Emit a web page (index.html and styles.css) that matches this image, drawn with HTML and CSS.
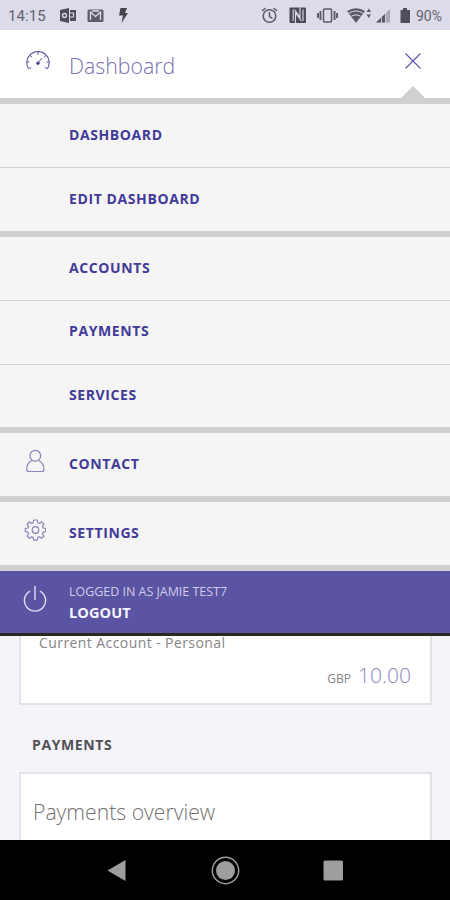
FILE: index.html
```
<!DOCTYPE html>
<html lang="en">
<head>
<meta charset="utf-8">
<title>Dashboard</title>
<link rel="stylesheet" href="styles.css">
</head>
<body>
<div class="screen">
  <div class="status">
    <span class="clock">14:15</span>
    <svg class="status-left" width="72" height="30" viewBox="60 0 72 30">
      <path fill="#4d4c58" d="M60 10l9-2v15l-9-2zM70 10h6v11h-6z"/>
      <circle cx="64.500" cy="15.500" r="2" fill="none" stroke="#dcdbea" stroke-width="1.300"/>
      <path d="M70 13h3.500v4H70" fill="none" stroke="#dcdbea" stroke-width="1.200"/>
      <rect x="87.500" y="9.500" width="16" height="12.500" rx="1.500" fill="#5c5b67"/>
      <path d="M90.500 20v-8l5 4.500 5-4.500v8M92 11h7" fill="none" stroke="#dcdbea" stroke-width="1.300"/>
      <path d="M120.500 8h6.500l-2 5h3l-6.500 10 1.500-7.500h-4z" fill="#45444f"/>
    </svg>
    <svg class="status-right" width="152" height="30" viewBox="260 0 152 30">
      <g fill="none" stroke="#5a5965" stroke-width="1.500">
        <circle cx="269.500" cy="16" r="6.300"/><path d="M269.500 12v4.500l3 2M262 11l3.500-3M277 11l-3.500-3"/>
        <rect x="323.500" y="9" width="8" height="13" rx="1"/>
        <path d="M320.500 11v9M334.500 11v9M318 13v5M337 13v5" stroke-width="1.900"/>
      </g>
      <rect x="289.500" y="7.500" width="16.500" height="15.500" rx="1" fill="#4b4a56"/>
      <path d="M293.200 9.500v11.500M295.500 23V13l6 8M300 7.500V17l-5.500-7.500M303 9.500V21" fill="none" stroke="#dcdbea" stroke-width="1.100"/>
      <path d="M347 11q9-5.500 18 0l-9 12z" fill="#5a5965"/>
      <path d="M349 13q7-4 14 0M351.500 16q4.500-2.500 9 0" fill="none" stroke="#dcdbea"/>
      <path d="M366.500 12l2.300-3.500 2.300 3.500zM366.500 14.500l2.300 3.500 2.300-3.500z" fill="#5a5965"/>
      <path d="M376 22.500L390 9v13.500z" fill="#a9a8b5"/>
      <path d="M376 22.500l9-8.500v8.500z" fill="#5a5965"/>
      <path d="M381.500 15v8M385.500 12v11" stroke="#dcdbea" stroke-width=".8"/>
      <path d="M400.500 10h2.500V8h4v2h3v13h-9.500z" fill="#4f4e5a"/>
    </svg>
    <span class="battery">90%</span>
  </div>

  <header class="header">
    <svg class="gauge" width="26" height="24" viewBox="0 0 26 24" fill="none" stroke="#5d569f">
      <path d="M3.600 17.800A11.200 11.200 0 1 1 22.400 17.800" stroke-width="1.100"/>
      <path d="M3.600 17.800l2.600-1.500M2 11h2.500M5.500 4.500L7 6.500M13 1v3M20.500 4.500L19 6.500M24 11h-2.500M22.400 17.800l-2.600-1.500M13 12l4-5"/>
      <circle cx="13" cy="12.200" r="1.300" fill="#2b2091"/>
    </svg>
    <span class="title">Dashboard</span>
    <svg class="close" width="16" height="16" viewBox="0 0 16 16"><path d="M.5.500l15 15M15.500.500l-15 15" stroke="#5850a5" stroke-width="1.100"/></svg>
    <span class="notch"></span>
  </header>

  <nav class="menu">
    <div class="group">
      <a class="item"><span class="label">DASHBOARD</span></a>
      <a class="item"><span class="label">EDIT DASHBOARD</span></a>
    </div>
    <div class="group middle">
      <a class="item"><span class="label">ACCOUNTS</span></a>
      <a class="item"><span class="label">PAYMENTS</span></a>
      <a class="item"><span class="label">SERVICES</span></a>
    </div>
    <div class="group">
      <a class="item">
        <svg class="icon" width="22" height="24" viewBox="0 0 22 24" fill="none" stroke="#8984b9" stroke-width="1.200"><circle cx="11.300" cy="6.800" r="5.400"/><path d="M7.800 11.500C4 13.500 2.700 17 2.700 20.500Q2.700 22.500 4.700 22.500h13.200q2 0 2-2C19.900 17 18.600 13.500 14.800 11.500"/></svg>
        <span class="label">CONTACT</span>
      </a>
    </div>
    <div class="group">
      <a class="item">
        <svg class="icon" width="22" height="24" viewBox="-11.500 -12 22 24" fill="none" stroke="#8984b9" stroke-width="1.200" stroke-linejoin="round"><circle r="3.300"/><path d="M-1.800-10h3.600l.5 2.700 1.700.7L6.200-8.200 8.500-5.900 6.900-3.700l.7 1.700 2.600.4v3.300l-2.600.4-.7 1.700 1.600 2.200-2.300 2.300L4 6.700l-1.700.7-.5 2.700h-3.600l-.5-2.700L-4 6.700l-2.200 1.600L-8.500 6l1.600-2.200-.7-1.700-2.600-.4v-3.300l2.600-.4.7-1.700-1.600-2.200 2.300-2.300L-4-6.600l1.700-.7z"/></svg>
        <span class="label">SETTINGS</span>
      </a>
    </div>
  </nav>

  <div class="logout">
    <svg class="power" width="24" height="28" viewBox="0 0 24 28" fill="none" stroke="#e2e0f2" stroke-width="1.400"><path d="M7 6.200a10.600 10.600 0 1 0 10 0M12 1v14"/></svg>
    <div class="logout-text">
      <span class="user">LOGGED IN AS JAMIE TEST7</span>
      <span class="action">LOGOUT</span>
    </div>
  </div>

  <main class="content">
    <section class="card account">
      <span class="account-name">Current Account - Personal</span>
      <div class="balance"><span class="currency">GBP</span><span class="amount">10.00</span></div>
    </section>
    <h2 class="heading">PAYMENTS</h2>
    <section class="card overview"><span class="overview-title">Payments overview</span></section>
  </main>

  <div class="navbar">
    <svg width="240" height="32" viewBox="0 0 240 32" fill="#9e9e9e"><path d="M2.500 16.500L20.500 6v21z"/><circle cx="120.500" cy="16.500" r="9.500"/><circle cx="120.500" cy="16.500" r="13.200" fill="none" stroke="#9e9e9e" stroke-width="1.400"/><rect x="218.500" y="6.500" width="19.500" height="20" rx="1.500"/></svg>
  </div>
</div>
</body>
</html>
```
FILE: styles.css
```
* { box-sizing: border-box; }
body { margin: 0; font-family: "Open Sans", sans-serif; background: #f5f4fa; }
.screen { width: 450px; height: 900px; display: flex; flex-direction: column; overflow: hidden; }
.screen > * { flex-shrink: 0; }
svg { display: block; flex-shrink: 0; }
span { white-space: nowrap; }

.status { height: 30px; display: flex; align-items: center; background: #dcdbea; padding-left: 8px; font-family: Roboto, sans-serif; font-size: 15px; color: #62616d; }
.clock { width: 52px; letter-spacing: .1px; padding-top: 2px; }
.status-right { margin-left: 128px; }
.battery { margin-left: 4px; font-size: 14px; padding-top: 2px; }

.header { height: 74px; display: flex; position: relative; background: #fff; border-bottom: 6px solid #d0d0d0; padding: 20px 29px 0 25px; }
.title { margin: 1px 0 0 18px; font-size: 21.300px; line-height: 30px; font-weight: 300; color: #7770ae; }
.close { margin: 3px 0 0 auto; }
.gauge { margin-top: 1px; }
.notch { position: absolute; right: 25px; bottom: 0; width: 24px; height: 12px; background: #d0d0d0; clip-path: polygon(50% 0, 100% 100%, 0 100%); }

.menu { height: 467px; }
.group { border-bottom: 6px solid #d0d0d0; }
.item { display: flex; align-items: center; height: 63px; background: #f5f5f5; padding: 0 0 3px 24px; }
.item + .item { height: 64px; border-top: 1px solid #d4d4d4; }
.middle .item + .item { height: 63.500px; }
.icon { margin-top: -5px; }
.label { margin-left: 45px; font-size: 14px; font-weight: 700; letter-spacing: .600px; color: #423a98; }
.icon + .label { margin-left: 23px; }

.logout { height: 65px; display: flex; background: #5a54a2; border-bottom: 3px solid #29291f; padding: 14px 0 0 23px; }
.logout-text { display: flex; flex-direction: column; margin: -4px 0 0 22px; }
.user { font-size: 12.500px; line-height: 21px; letter-spacing: -.030px; color: #d0cde8; }
.action { font-size: 14.500px; line-height: 21px; font-weight: 700; letter-spacing: .1px; color: #f5f4ff; }

.content { height: 204px; padding: 0 18px 0 19px; }
.card { background: #fff; border: 2px solid #e3e3e7; }
.account { height: 69px; border-top: 0; padding: 0 19px 0 18px; }
.account-name { display: block; font-size: 14px; line-height: 14px; letter-spacing: .420px; color: #858585; }
.balance { display: flex; justify-content: flex-end; align-items: baseline; margin-top: 9px; line-height: 32px; }
.currency { font-size: 12px; color: #858585; margin-right: 7px; }
.amount { font-size: 21px; font-weight: 300; color: #8c86bc; }
.heading { margin: 30px 0 17px 13px; font-size: 14px; line-height: 20px; font-weight: 700; letter-spacing: .600px; color: #505055; }
.overview { height: 68px; border-bottom: 0; padding: 22px 12px 0; }
.overview-title { font-size: 21.200px; line-height: 32px; font-weight: 300; color: #707070; }

.navbar { height: 60px; background: #000; display: flex; justify-content: center; padding-top: 14px; }
```
